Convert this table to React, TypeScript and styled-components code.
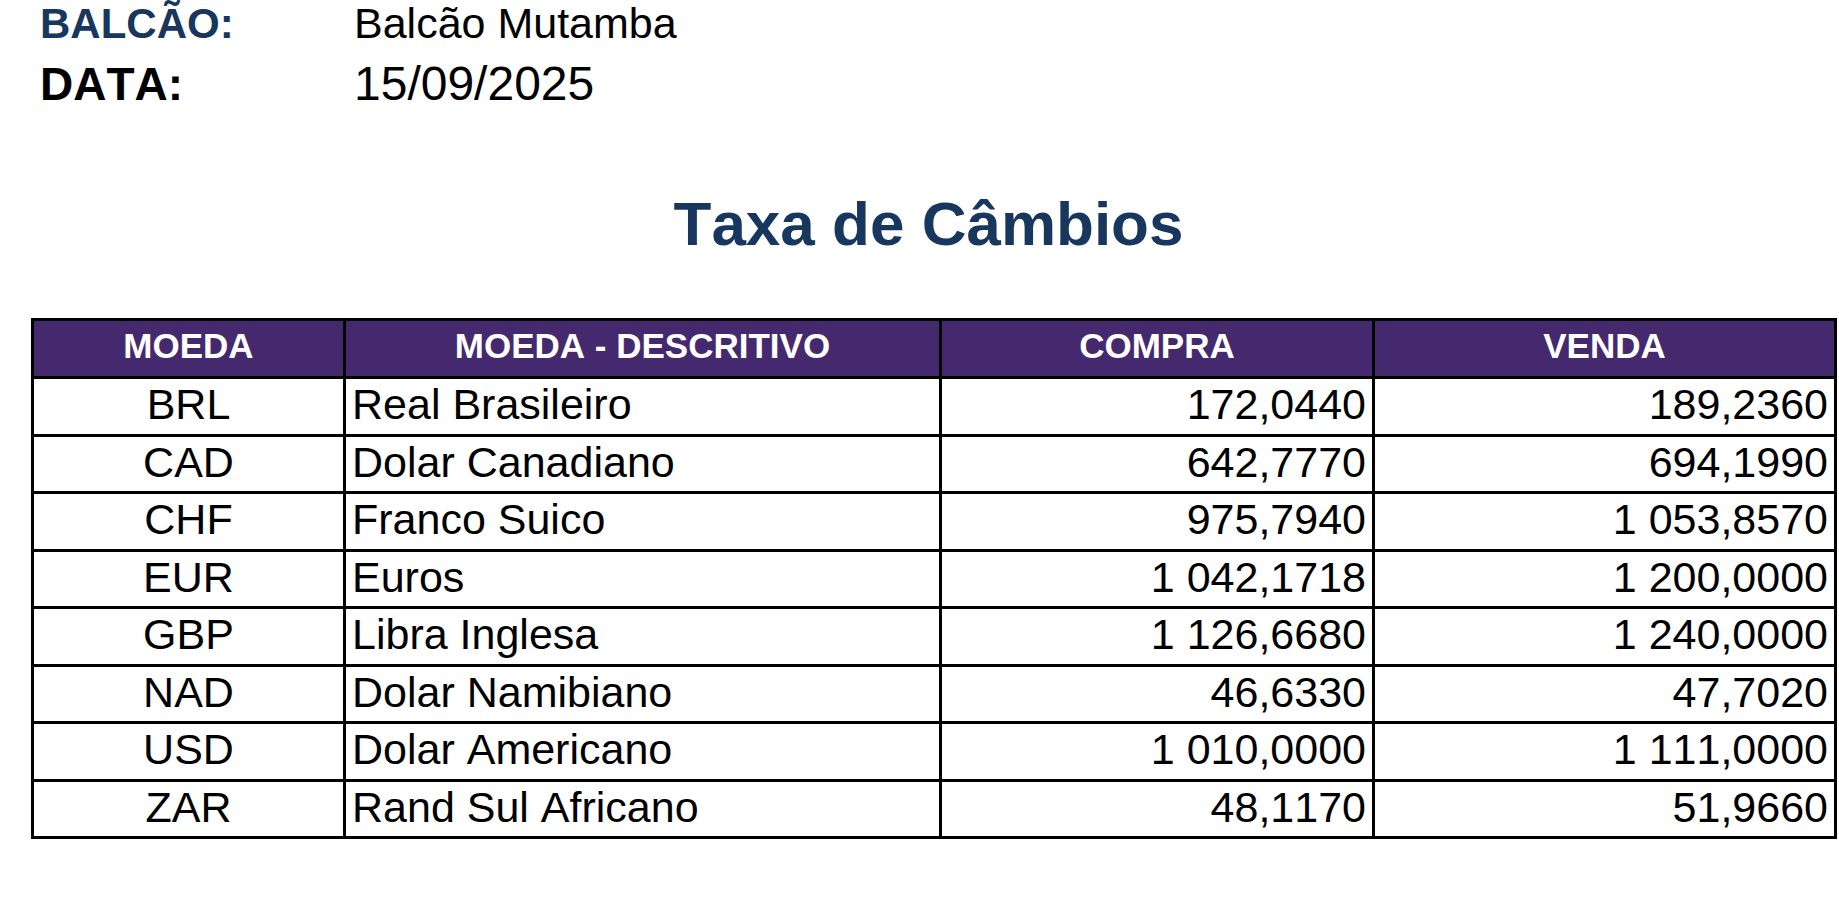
import React from "react";
import styled, { createGlobalStyle } from "styled-components";

const GlobalStyle = createGlobalStyle`
  html, body {
    margin: 0;
    padding: 0;
    background: #ffffff;
  }
  body {
    font-family: "Liberation Sans", Arial, "Helvetica Neue", sans-serif;
    font-kerning: none;
    color: #000000;
  }
`;

const NAVY = "#17375e";
const PURPLE = "#44296f";

const Page = styled.div`
  width: 1839px;
  height: 917px;
  overflow: hidden;
  box-sizing: border-box;
  display: flex;
  flex-direction: column;
`;

const Info = styled.div`
  display: grid;
  grid-template-columns: 314px auto;
  grid-template-rows: 47px 52px;
  row-gap: 11px;
  align-items: baseline;
  padding-left: 40px;
`;

const InfoLabel = styled.div<{ $size: number; $color: string; $lh: number }>`
  font-size: ${(p) => p.$size}px;
  line-height: ${(p) => p.$lh}px;
  font-weight: 700;
  color: ${(p) => p.$color};
  white-space: nowrap;
`;

const InfoValue = styled.div<{ $size: number; $lh: number }>`
  font-size: ${(p) => p.$size}px;
  line-height: ${(p) => p.$lh}px;
  font-weight: 400;
  color: #000000;
  white-space: nowrap;
`;

const TitleBar = styled.div`
  margin-top: 79px;
  margin-left: 31px;
  width: 1806px;
  box-sizing: border-box;
  padding-right: 11px;
  text-align: center;
`;

const Title = styled.h1`
  margin: 0;
  font-size: 62px;
  line-height: 70px;
  font-weight: 700;
  color: ${NAVY};
`;

const Table = styled.div`
  margin-top: 59px;
  margin-left: 31px;
  width: 1806px;
  box-sizing: border-box;
  display: grid;
  grid-template-columns: 312px 596px 433px 462px;
  border-left: 3px solid #000;
  border-top: 3px solid #000;
`;

type Align = "left" | "center" | "right";

const justify = (a: Align) =>
  a === "left" ? "flex-start" : a === "right" ? "flex-end" : "center";

const HeadCell = styled.div`
  box-sizing: border-box;
  height: 58px;
  display: flex;
  align-items: center;
  justify-content: center;
  padding: 0 6px 7px;
  background: ${PURPLE};
  color: #ffffff;
  font-size: 35px;
  line-height: 35px;
  font-weight: 700;
  border-right: 3px solid #000;
  border-bottom: 3px solid #000;
  white-space: nowrap;
`;

const Cell = styled.div<{ $align: Align }>`
  box-sizing: border-box;
  height: 57.5px;
  display: flex;
  align-items: center;
  justify-content: ${(p) => justify(p.$align)};
  padding: 0 6px 3px;
  font-size: 43px;
  line-height: 43px;
  font-weight: 400;
  color: #000;
  border-right: 3px solid #000;
  border-bottom: 3px solid #000;
  white-space: nowrap;
`;

const rows: [string, string, string, string][] = [
  ["BRL", "Real Brasileiro", "172,0440", "189,2360"],
  ["CAD", "Dolar Canadiano", "642,7770", "694,1990"],
  ["CHF", "Franco Suico", "975,7940", "1 053,8570"],
  ["EUR", "Euros", "1 042,1718", "1 200,0000"],
  ["GBP", "Libra Inglesa", "1 126,6680", "1 240,0000"],
  ["NAD", "Dolar Namibiano", "46,6330", "47,7020"],
  ["USD", "Dolar Americano", "1 010,0000", "1 111,0000"],
  ["ZAR", "Rand Sul Africano", "48,1170", "51,9660"],
];

const headers = ["MOEDA", "MOEDA - DESCRITIVO", "COMPRA", "VENDA"];

export default function App() {
  return (
    <>
      <GlobalStyle />
      <Page>
        <Info>
          <InfoLabel $size={42} $lh={47} $color={NAVY}>BALCÃO:</InfoLabel>
          <InfoValue $size={43} $lh={47}>Balcão Mutamba</InfoValue>
          <InfoLabel $size={46} $lh={52} $color="#000000">DATA:</InfoLabel>
          <InfoValue $size={48} $lh={52}>15/09/2025</InfoValue>
        </Info>
        <TitleBar>
          <Title>Taxa de Câmbios</Title>
        </TitleBar>
        <Table>
          {headers.map((h) => (
            <HeadCell key={h}>{h}</HeadCell>
          ))}
          {rows.map((r) => (
            <React.Fragment key={r[0]}>
              <Cell $align="center">{r[0]}</Cell>
              <Cell $align="left">{r[1]}</Cell>
              <Cell $align="right">{r[2]}</Cell>
              <Cell $align="right">{r[3]}</Cell>
            </React.Fragment>
          ))}
        </Table>
      </Page>
    </>
  );
}
